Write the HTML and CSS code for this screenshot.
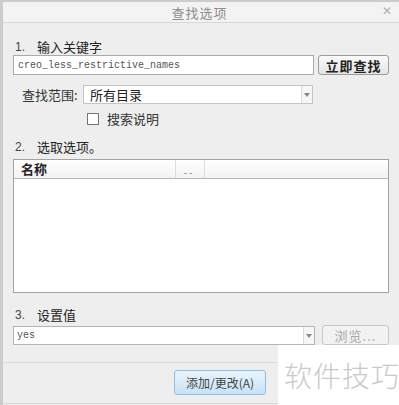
FILE: index.html
```html
<!DOCTYPE html>
<html lang="zh-CN">
<head>
    <meta charset="UTF-8">
    <title>查找选项</title>
    <link rel="stylesheet" href="styles.css">
</head>
<body>
    <div class="dialog">
        <div class="titlebar">
            <span class="title">查找选项</span>
            <span class="close">&#x2715;</span>
        </div>

        <div class="content">
            <div class="step"><span class="num">1.</span>输入关键字</div>
            <div class="row">
                <div class="field grow mono">creo_less_restrictive_names</div>
                <button class="btn btn-find">立即查找</button>
            </div>

            <div class="row scope">
                <span class="scope-label">查找范围:</span>
                <div class="field select">
                    <span class="select-text">所有目录</span>
                    <span class="arrow"></span>
                </div>
            </div>

            <label class="check-row">
                <span class="checkbox"></span>
                搜索说明
            </label>

            <div class="step step-2"><span class="num">2.</span>选取选项。</div>
            <div class="table">
                <div class="thead">
                    <div class="th th-name">名称</div>
                    <div class="th th-dash">- -</div>
                    <div class="th th-rest"></div>
                </div>
                <div class="tbody"></div>
            </div>

            <div class="step step-3"><span class="num">3.</span>设置值</div>
            <div class="row value-row">
                <div class="field grow combo">
                    <span class="mono">yes</span>
                    <span class="arrow"></span>
                </div>
                <button class="btn btn-browse" disabled>浏览...</button>
            </div>
        </div>

        <div class="footer">
            <button class="btn btn-add">添加/更改(A)</button>
        </div>

        <div class="watermark">软件技巧</div>
    </div>
</body>
</html>
```

FILE: styles.css
```css
* {
    margin: 0;
    padding: 0;
    box-sizing: border-box;
    font-family: "Noto Sans CJK SC", "DejaVu Sans", sans-serif;
}

body {
    background: #eeeeee;
    width: 399px;
    height: 405px;
    overflow: hidden;
}

.dialog {
    position: relative;
    height: 405px;
    border-left: 3px solid #cccccc;
    border-top: 2px solid #cccccc;
    background: #eeeeee;
    color: #222;
}

.titlebar {
    height: 21px;
    background: #f3f3f3;
    border-bottom: 1px solid #d6d6d6;
    display: flex;
    align-items: center;
    justify-content: center;
    position: relative;
}

.title {
    font-size: 13px;
    color: #8c8c8c;
    letter-spacing: 1px;
    margin-left: -3px;
}

.close {
    position: absolute;
    right: 7px;
    top: 2px;
    font-size: 12px;
    color: #b0b0b0;
    font-family: "DejaVu Sans", sans-serif;
}

.content {
    padding: 0 10px 0 10px;
}

.step {
    height: 16px;
    line-height: 16px;
    font-size: 13px;
    color: #222;
    margin-top: 16px;
    display: flex;
}

.num {
    width: 24px;
    padding-left: 2px;
    color: #444;
    font-family: "Liberation Sans", sans-serif;
    font-size: 12px;
}

.step-2 {
    margin-top: 14px;
}

.step-3 {
    margin-top: 14px;
}

.row {
    display: flex;
    align-items: center;
}

.field {
    background: #fff;
    border: 1px solid #a9a9a9;
    height: 20px;
    display: flex;
    align-items: center;
}

.grow {
    flex: 1;
}

.mono {
    font-family: "Liberation Mono", "DejaVu Sans Mono", monospace;
    font-size: 10px;
    color: #555;
    padding-left: 4px;
}

.btn {
    height: 20px;
    border: 1px solid #9c9c9c;
    border-radius: 3px;
    background: linear-gradient(#fafafa, #e4e4e4);
    font-size: 13px;
    color: #222;
}

.btn-find {
    width: 71px;
    margin-left: 4px;
    font-weight: bold;
    letter-spacing: 1px;
}

.scope {
    margin-top: 10px;
    padding-left: 9px;
}

.scope-label {
    width: 61px;
    font-size: 13px;
    color: #333;
}

.select {
    width: 230px;
    height: 19px;
    border-color: #c4c4c4;
    justify-content: space-between;
}

.select-text {
    font-size: 13px;
    padding-left: 6px;
    color: #222;
}

.arrow {
    width: 11px;
    height: 17px;
    border-left: 1px solid #dcdcdc;
    background: #f6f6f6;
    position: relative;
}

.arrow::after {
    content: '';
    position: absolute;
    left: 2px;
    top: 7px;
    border-left: 3px solid transparent;
    border-right: 3px solid transparent;
    border-top: 4px solid #8a8a8a;
}

.check-row {
    display: flex;
    align-items: center;
    margin-top: 8px;
    padding-left: 74px;
    font-size: 13px;
    color: #333;
    height: 13px;
}

.checkbox {
    width: 12px;
    height: 12px;
    border: 1px solid #777;
    background: #fff;
    margin-right: 8px;
}

.table {
    margin-top: 4px;
    height: 134px;
    border: 1px solid #a3a3a3;
    background: #fff;
    display: flex;
    flex-direction: column;
}

.thead {
    height: 19px;
    display: flex;
    border-bottom: 1px solid #b8b8b8;
    background: linear-gradient(#ffffff, #f2f2f2);
}

.th {
    border-right: 1px solid #dddddd;
    font-size: 13px;
}

.th-name {
    width: 162px;
    padding-left: 7px;
    font-weight: bold;
    line-height: 18px;
}

.th-dash {
    width: 29px;
    font-size: 9px;
    color: #666;
    padding: 6px 0 0 8px;
}

.th-rest {
    flex: 1;
    border-right: none;
}

.tbody {
    flex: 1;
}

.value-row {
    margin-top: 2px;
}

.combo {
    height: 19px;
    justify-content: space-between;
    border-color: #b5b5b5;
}

.combo .mono {
    padding-left: 3px;
    color: #555;
}

.btn-browse {
    width: 67px;
    height: 20px;
    margin-left: 7px;
    border-color: #c8c8c8;
    background: #f2f2f2;
    color: #a8a8a8;
    letter-spacing: 1px;
}

.footer {
    margin-top: 17px;
    border-top: 1px solid #dadada;
    border-bottom: 1px solid #d6d6d6;
    height: 42px;
    padding: 6px 0 0 171px;
}

.btn-add {
    width: 92px;
    height: 25px;
    border: 1px solid #8fbfe6;
    background: linear-gradient(#e8f4fc, #c8e3f6);
    font-size: 12px;
    color: #444;
}

.watermark {
    position: absolute;
    left: 275px;
    top: 343px;
    width: 124px;
    height: 62px;
    background: #fff;
    color: #c9c9c9;
    font-size: 28px;
    font-weight: 300;
    padding: 10px 0 0 6px;
    letter-spacing: 1px;
}
```
